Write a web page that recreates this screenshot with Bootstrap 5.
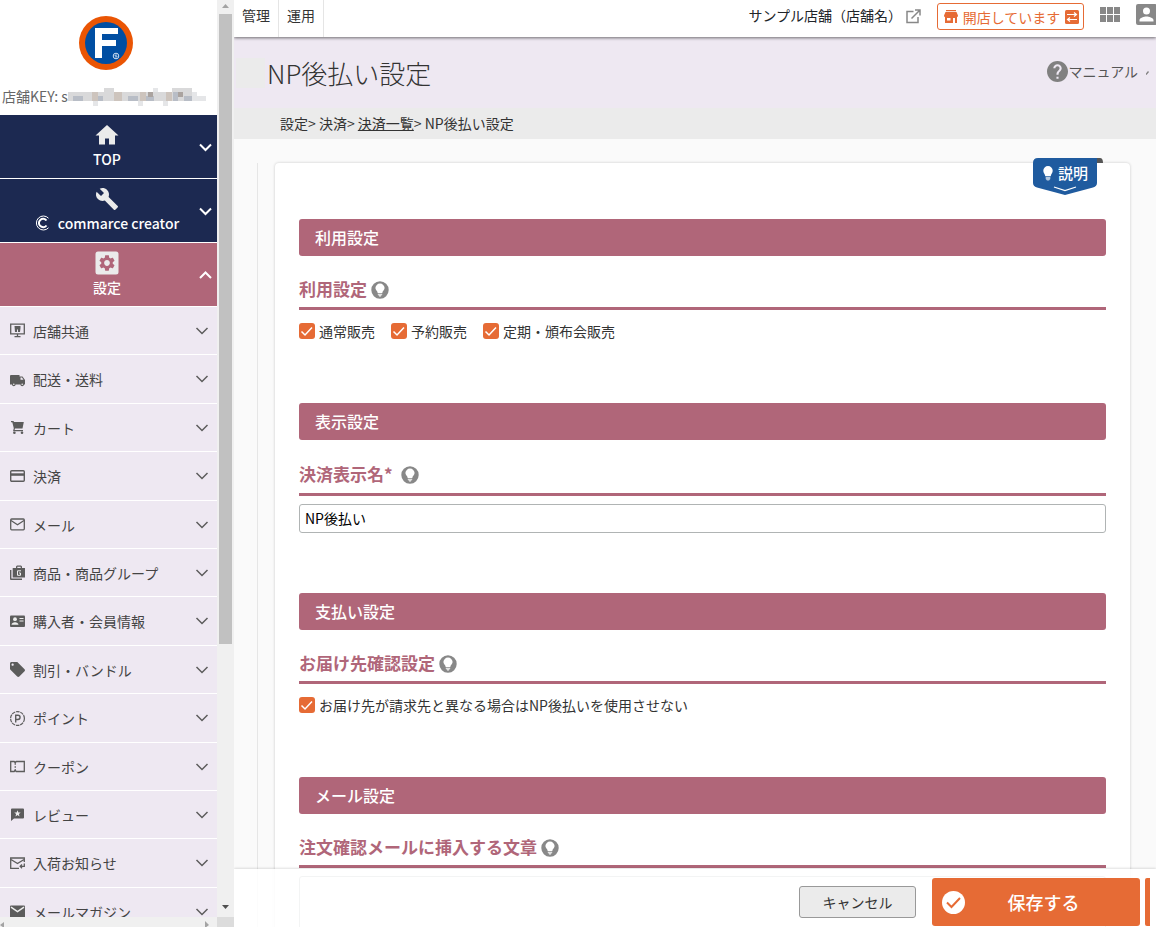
<!DOCTYPE html>
<html lang="ja">
<head>
<meta charset="utf-8">
<meta name="viewport" content="width=device-width, initial-scale=1">
<title>NP後払い設定</title>
<link href="https://cdn.jsdelivr.net/npm/bootstrap@5.3.0/dist/css/bootstrap.min.css" rel="stylesheet">
<style>
  :root { --rose: #b06679; --navy: #1c2951; --lav: #eee8f2; --orange: #e66b35; --ink: #333; --grey: #888; }
  body { font-family: "Noto Sans CJK JP", "Noto Sans", sans-serif; font-size: 14px; line-height: 20px; color: var(--ink); background: #fafafa; }
  a { color: inherit; text-decoration: none; }
  svg { display: block; flex: none; fill: currentColor; }
  .line-art { fill: none; stroke: currentColor; }

  /* sidebar */
  .side { width: 234px; }
  .brand { height: 115px; padding: 16px 0 0; color: #666; }
  .brand .logo { margin-left: 79px; }
  .shop-key { margin-top: 16px; padding-left: 2px; height: 20px; }
  .big-item { height: 64px; border-bottom: 1px solid #fff; background: var(--navy); color: #fff; font-weight: 500; padding: 8px 12px 0 0; }
  .big-item.open { background: var(--rose); }
  .big-item .pic { width: 24px; height: 24px; color: #ebebeb; margin-left: 9px; }
  .big-item .caption { padding-left: 9px; margin-top: 2px; }
  .big-item .arrow { right: 5px; top: 25px; }
  .sub-menu li { height: 48px; border-bottom: 1px solid #fff; background: var(--lav); }
  .sub-menu li:nth-child(5n+2), .sub-menu li:nth-child(5n+4) { height: 49px; }
  .sub-menu a { height: 100%; padding: 0 8px 0 10px; color: #444; }
  .sub-menu svg { color: #5c5c5c; }
  .sub-menu .label { margin-left: 8px; }
  .vbar { width: 17px; background: #f0f0f0; padding: 2px; }
  .vbar .thumb { width: 13px; height: 69%; background: #c1c1c1; margin-top: 5px; }
  .hbar { height: 10px; background: #f0f0f0; color: #a3a3a3; }
  .hbar .corner { width: 17px; height: 10px; background: #dcdcdc; }

  /* header */
  .top-bar { height: 37px; background: #fff; box-shadow: 0 1px 3px rgba(0,0,0,.55); z-index: 2; overflow: hidden; clip-path: inset(0 0 -6px 0); }
  .top-tab { height: 37px; padding: 5px 8px 0; border-right: 1px solid #e5e5e5; }
  .top-tools { margin-right: -1px; padding-top: 3px; color: var(--grey); }
  .shop-link { padding-top: 2px; }
  .open-btn { width: 147px; height: 27px; border: 1px solid var(--orange); border-radius: 3px; background: #fff; color: var(--orange); padding: 0 4px 0 6px; line-height: 20px; }
  .title-bar { height: 71px; background: var(--lav); padding-left: 2px; }
  .title-bar .swatch { width: 29px; height: 30px; background: #ebebeb; }
  .title-bar h1 { font-size: 26px; line-height: 40px; font-weight: 200; margin: 0 0 0 2px; }
  .manual { color: #555; padding-right: 7px; padding-bottom: 3px; }
  .manual svg { color: #808080; }
  .crumbs { height: 31px; background: #ebebeb; padding: 5px 0 0 46px; }

  /* settings panel */
  .work { border-left: 1px solid #e6e6e6; margin: 24px 26px 0 23px; padding-left: 17px; }
  .panel { background: #fff; border-radius: 4px; box-shadow: 0 0 3px rgba(0,0,0,.2); padding: 56px 24px 60px; }
  .bar-title { height: 37px; background: var(--rose); color: #fff; border-radius: 3px; font-size: 16px; line-height: 37px; font-weight: 500; padding-left: 16px; margin: 0; }
  .sub-title { height: 54px; border-bottom: 3px solid var(--rose); color: var(--rose); font-size: 17px; line-height: 24px; font-weight: 700; margin: 0; padding-top: 21px; }
  .sub-title.required { height: 56px; padding-top: 22px; }
  .sub-title svg { color: var(--grey); }
  .field-area { padding: 8px 0 60px; }
  .choice-row { height: 25px; }
  .choice { padding: 0; min-height: 0; margin: 0; }
  .choice .form-check-input { width: 16px; height: 16px; margin: 0 4px 0 0; float: none; border: 0; border-radius: 3px; background-color: var(--orange); }
  .choice .form-check-input:checked[type=checkbox] { background-image: url("data:image/svg+xml,%3csvg xmlns='http://www.w3.org/2000/svg' viewBox='0 0 16 16'%3e%3cpath fill='none' stroke='%23fff' stroke-width='1.500' d='m2.500 8.500 3.500 3.500L13 4.500'/%3e%3c/svg%3e"); }
  .name-box, .mail-box { border: 1px solid #b0b4b4; border-radius: 3px; padding: 0 5px 2px; font-size: 14px; color: #000; }
  .name-box { height: 29px; }
  .mail-box { height: 100px; }
  .help-tag { right: 26px; top: -5px; width: 71px; height: 38px; border: 0; background: none; color: #fff; font-weight: 500; padding: 0; }
  .help-tag .shape { left: 0; top: 0; }
  .help-tag .words { left: 25px; top: 5px; font-size: 15px; }

  /* action bar */
  .actions { height: 58px; background: rgba(255,255,255,.85); box-shadow: 0 -1px 2px rgba(0,0,0,.12); padding: 0 6px 0 16px; }
  .cancel { width: 117px; height: 32px; background: #ebebeb; border: 1px solid #999; border-radius: 3px; color: var(--ink); }
  .save { width: 208px; height: 48px; background: var(--orange); color: #fff; border: 0; border-radius: 3px; font-size: 18px; font-weight: 500; padding: 0 18px 0 10px; margin-right: 5px; }
  .sliver { width: 5px; height: 48px; background: var(--orange); border-radius: 2px 0 0 2px; }
</style>
</head>
<body>
<svg width="0" height="0" class="position-absolute">
  <symbol id="down" viewBox="0 0 14 8"><path d="M1.500 1 7 6.500 12.500 1" fill="none" stroke="currentColor" stroke-width="1.500"/></symbol>
  <symbol id="bulb" viewBox="0 0 18 18"><path fill-rule="evenodd" d="M9 .3a8.7 8.7 0 1 0 0 17.4A8.7 8.7 0 0 0 9 .3zM9 2.6a4.6 4.6 0 0 1 4.6 4.5c0 2.100-2.100 2.900-2.300 4.900H6.700C6.500 10 4.400 9.200 4.400 7.100A4.600 4.600 0 0 1 9 2.600zM6.800 12.700h4.400v1H6.800zM7.300 14.300h3.400l-1 1.300H8.300z"/></symbol>
</svg>

<div class="d-flex vh-100 overflow-hidden">
  <aside class="side d-flex flex-column flex-shrink-0">
    <div class="d-flex flex-grow-1 overflow-hidden">
      <nav class="flex-grow-1 overflow-hidden">
        <div class="brand bg-white">
          <svg class="logo" width="54" height="54" viewBox="0 0 54 54">
            <circle cx="27" cy="27" r="27" fill="#ea5504"/><circle cx="27" cy="27" r="21" fill="#004ea2"/>
            <path d="M16 12h23v6H23v6h14v6H23v12h-7z" fill="#fff"/>
            <circle cx="37" cy="40" r="2.800" fill="none" stroke="#cfe0f2"/><path d="M38 39h-2v1h2v1h-2" fill="none" stroke="#cfe0f2" stroke-width=".7"/>
          </svg>
          <div class="shop-key d-flex align-items-center"><span>店舗KEY: s</span>
            <svg width="138" height="20" viewBox="0 0 138 20">
              <path fill="#d9d9da" d="M0 6h125v9H0zM36 2h10v4H36zM104 2h20v4h-20z"/>
              <path fill="#b8bdc6" d="M5 10h10v5H5zM30 10h5v5h-5zM60 10h10v5H60zM76 10h10v5H76zM105 6h5v9h-5zM116 10h9v5h-9z"/>
              <path fill="#cdc4bd" d="M24 6h6v9h-6zM46 6h8v9h-8zM72 6h6v9h-6zM98 6h6v9h-6z"/>
              <path fill="#aaa39f" d="M80 6h5v5h-5zM110 6h5v5h-5z"/>
              <path fill="#e5e6e8" d="M25 15h5v5h-5zM70 15h5v5h-5zM95 15h5v5h-5zM85 2h5v4h-5zM124 6h5v9h-5zM129 10h9v5h-9z"/>
            </svg></div>
        </div>

        <a href="#" class="big-item position-relative d-flex flex-column align-items-center">
          <svg class="pic" viewBox="0 0 24 24"><path d="M10 21.500v-6h4v6h6v-9h3.500L12 2 .5 12.500H4v9z"/></svg>
          <span class="caption">TOP</span>
          <svg class="arrow position-absolute" width="13" height="14" viewBox="0 0 13 14"><path class="line-art" stroke-width="2" d="M1 4.500 6.500 10 12 4.500"/></svg>
        </a>
        <a href="#" class="big-item position-relative d-flex flex-column align-items-center">
          <svg class="pic" viewBox="0 0 24 24"><path d="M22.700 19l-9.100-9.100c.9-2.300.4-5-1.500-6.900-2-2-5-2.400-7.400-1.300L9 6 6 9 1.600 4.700C.4 7.100.9 10.100 2.900 12.100c1.900 1.900 4.600 2.400 6.900 1.500l9.100 9.100c.4.4 1 .4 1.400 0l2.300-2.300c.5-.4.5-1.100.1-1.400z"/></svg>
          <span class="caption d-flex align-items-center"><svg class="me-1" width="15" height="16" viewBox="0 0 15 16"><g class="line-art"><path stroke-width="2" d="M11.500 5.500a4.200 4.200 0 1 0 0 5"/><path d="M13.500 3.200A7 7 0 1 0 13.500 12.800" stroke-width="1"/></g></svg><span class="ps-1">commarce creator</span></span>
          <svg class="arrow position-absolute" width="13" height="14" viewBox="0 0 13 14"><path class="line-art" stroke-width="2" d="M1 4.500 6.500 10 12 4.500"/></svg>
        </a>
        <a href="#" class="big-item open position-relative d-flex flex-column align-items-center">
          <svg class="pic" viewBox="0 0 24 24"><rect x=".5" y=".5" width="23" height="23" rx="2.500"/><path transform="translate(2.400 2.400) scale(.8)" fill="#b06679" d="M19.140 12.940c.04-.3.06-.61.06-.94 0-.32-.02-.64-.07-.94l2.030-1.580c.18-.14.23-.41.12-.61l-1.920-3.320c-.12-.22-.37-.29-.59-.22l-2.390.96c-.5-.38-1.030-.7-1.620-.94l-.36-2.540c-.04-.24-.24-.41-.48-.41h-3.840c-.24 0-.43.17-.47.41l-.36 2.540c-.59.24-1.130.57-1.620.94l-2.390-.96c-.22-.08-.47 0-.59.22L2.740 8.870c-.12.21-.08.47.12.61l2.030 1.580c-.05.3-.09.63-.09.94s.02.64.07.94l-2.030 1.580c-.18.14-.23.41-.12.61l1.920 3.320c.12.22.37.29.59.22l2.390-.96c.5.38 1.030.7 1.620.94l.36 2.540c.05.24.24.41.48.41h3.840c.24 0 .44-.17.47-.41l.36-2.540c.59-.24 1.130-.56 1.620-.94l2.390.96c.22.08.47 0 .59-.22l1.920-3.320c.12-.22.07-.47-.12-.61l-2.010-1.580zM12 15.600c-1.980 0-3.600-1.620-3.600-3.600s1.620-3.600 3.600-3.600 3.600 1.620 3.600 3.600-1.620 3.600-3.600 3.600z"/></svg>
          <span class="caption">設定</span>
          <svg class="arrow position-absolute" width="13" height="14" viewBox="0 0 13 14"><path class="line-art" stroke-width="2" d="M1 10 6.500 4.500 12 10"/></svg>
        </a>

        <ul class="sub-menu list-unstyled mb-0">
          <li><a href="#" class="d-flex align-items-center"><svg width="15" height="15" viewBox="0 0 15 15"><path class="line-art" stroke-width="1.300" d="M.7 1.200h13.600v9.600H.7zM7.500 11v3M4.500 13.700h6"/><path d="M4.500 3h6v2l-.5 4H8V6.500H7V9H5z"/></svg><span class="label">店舗共通</span><svg class="ms-auto" width="14" height="8"><use href="#down"/></svg></a></li>
          <li><a href="#" class="d-flex align-items-center"><svg width="15" height="15" viewBox="0 0 15 15"><path fill-rule="evenodd" d="M1 3h8.500v1.500h3l2.500 3.500v4.500h-1a1.800 1.800 0 0 1-3.600 0H5.600a1.800 1.800 0 0 1-3.600 0H0V4q0-1 1-1zM10.500 5.500v2.300h3L12 5.500z"/><circle cx="3.800" cy="12.300" r=".8" fill="#eee"/><circle cx="12.200" cy="12.300" r=".8" fill="#eee"/></svg><span class="label">配送・送料</span><svg class="ms-auto" width="14" height="8"><use href="#down"/></svg></a></li>
          <li><a href="#" class="d-flex align-items-center"><svg width="15" height="15" viewBox="0 0 15 15"><path d="M1 1h2.500l.5 1h9.800l-1.300 6.500H5L4.600 10H13v1.300H3L3.800 8.300 2.300 2.300H1z"/><circle cx="4.400" cy="12.700" r="1.300"/><circle cx="12" cy="12.700" r="1.300"/></svg><span class="label">カート</span><svg class="ms-auto" width="14" height="8"><use href="#down"/></svg></a></li>
          <li><a href="#" class="d-flex align-items-center"><svg width="15" height="15" viewBox="0 0 15 15"><rect class="line-art" x=".7" y="1.700" width="13.600" height="10.600" rx="1" stroke-width="1.400"/><path d="M1 4.300h13v2.500H1z"/></svg><span class="label">決済</span><svg class="ms-auto" width="14" height="8"><use href="#down"/></svg></a></li>
          <li><a href="#" class="d-flex align-items-center"><svg width="15" height="15" viewBox="0 0 15 15"><rect class="line-art" x=".7" y="2" width="13.600" height="10.800" rx="1" stroke-width="1.300"/><path class="line-art" stroke-width="1.300" d="m1 3.500 6.500 4.300L14 3.500"/></svg><span class="label">メール</span><svg class="ms-auto" width="14" height="8"><use href="#down"/></svg></a></li>
          <li><a href="#" class="d-flex align-items-center"><svg width="15" height="15" viewBox="0 0 15 15"><path d="M0 5h1.400v8.600H12V15H1q-1 0-1-1z"/><path fill-rule="evenodd" d="M6 3V1.500L7 .5h4l1 1V3h3v9.500H2.700V3zm1.300 0h3.400V1.800H7.300z"/><path d="M11 5.800H7.500v4.500h3V8H9" fill="none" stroke="#eee"/></svg><span class="label">商品・商品グループ</span><svg class="ms-auto" width="14" height="8"><use href="#down"/></svg></a></li>
          <li><a href="#" class="d-flex align-items-center"><svg width="15" height="15" viewBox="0 0 15 15"><rect y="1.500" width="15" height="11.500" rx="1"/><g fill="#eee"><circle cx="5" cy="5.200" r="1.900"/><path d="M1.500 10.800c0-3.500 7-3.500 7 0zM9.500 4h4v1h-4zM9.500 6.500h4v1h-4z"/></g></svg><span class="label">購入者・会員情報</span><svg class="ms-auto" width="14" height="8"><use href="#down"/></svg></a></li>
          <li><a href="#" class="d-flex align-items-center"><svg width="15" height="15" viewBox="2 2 20 20"><path d="M21.410 11.580l-9-9C12.050 2.220 11.550 2 11 2H4c-1.100 0-2 .9-2 2v7c0 .55.22 1.050.59 1.420l9 9c.36.36.86.58 1.410.58s1.050-.22 1.410-.59l7-7c.37-.36.59-.86.59-1.410s-.23-1.060-.59-1.420zM5.500 7C4.670 7 4 6.330 4 5.500S4.670 4 5.500 4 7 4.670 7 5.500 6.330 7 5.500 7z"/></svg><span class="label">割引・バンドル</span><svg class="ms-auto" width="14" height="8"><use href="#down"/></svg></a></li>
          <li><a href="#" class="d-flex align-items-center"><svg width="15" height="15" viewBox="0 0 15 15"><circle class="line-art" cx="7.500" cy="7.500" r="6.900" stroke-width="1.200" stroke-dasharray="3.600 .8"/><path class="line-art" stroke-width="1.400" d="M5.700 11.500V4.200h2.200a2 2 0 0 1 0 4.300H5.700"/></svg><span class="label">ポイント</span><svg class="ms-auto" width="14" height="8"><use href="#down"/></svg></a></li>
          <li><a href="#" class="d-flex align-items-center"><svg width="15" height="15" viewBox="0 0 15 15"><path class="line-art" stroke-width="1.300" d="M.7 2.500h3.500l1 1.200 1-1.200h8.100v10H6.200l-1-1.200-1 1.200H.7z"/><path class="line-art" stroke-dasharray="2 1" d="M5.200 4v8"/></svg><span class="label">クーポン</span><svg class="ms-auto" width="14" height="8"><use href="#down"/></svg></a></li>
          <li><a href="#" class="d-flex align-items-center"><svg width="15" height="15" viewBox="0 0 15 15"><path d="M2 1.500h11q1 0 1 1v8q0 1-1 1H4l-3 2.500V2.500q0-1 1-1z"/><path fill="#eee" d="m7.500 3.200.9 2.200 2.300.2-1.800 1.500.6 2.300-2-1.300-2 1.300.6-2.300-1.800-1.500 2.300-.2z"/></svg><span class="label">レビュー</span><svg class="ms-auto" width="14" height="8"><use href="#down"/></svg></a></li>
          <li><a href="#" class="d-flex align-items-center"><svg width="15" height="15" viewBox="0 0 15 15"><path class="line-art" stroke-width="1.300" d="M9 12.300H.7V2h13.600v4M1 3.500 7.500 7.500 14 3.500M14.300 7.500v2.800h-4M12 8.500l-1.800 1.800L12 12.200"/></svg><span class="label">入荷お知らせ</span><svg class="ms-auto" width="14" height="8"><use href="#down"/></svg></a></li>
          <li><a href="#" class="d-flex align-items-center"><svg width="15" height="15" viewBox="0 0 15 15"><rect y="1.500" width="15" height="12" rx="1"/><path d="m1 3.200 6.500 4.500L14 3.200" fill="none" stroke="#eee" stroke-width="1.400"/></svg><span class="label">メールマガジン</span><svg class="ms-auto" width="14" height="8"><use href="#down"/></svg></a></li>
        </ul>
      </nav>
      <div class="vbar d-flex flex-column align-items-center">
        <svg width="7" height="7" viewBox="0 0 7 7" color="#a3a3a3"><path d="M0 6 3.500 2 7 6z"/></svg>
        <div class="thumb"></div>
        <svg class="mt-auto mb-1" width="7" height="7" viewBox="0 0 7 7" color="#505050"><path d="M0 1h7L3.500 5z"/></svg>
      </div>
    </div>
    <div class="hbar d-flex justify-content-between">
      <svg width="4" height="10" viewBox="0 0 4 10"><path d="M4 5v6L0 8z"/></svg>
      <div class="d-flex"><svg class="me-2" width="4" height="10" viewBox="0 0 4 10"><path d="M0 4v7l4-3z"/></svg><div class="corner"></div></div>
    </div>
  </aside>

  <div class="flex-grow-1 d-flex flex-column position-relative overflow-hidden">
    <header class="top-bar d-flex flex-shrink-0 position-relative">
      <a href="#" class="top-tab">管理</a>
      <a href="#" class="top-tab">運用</a>
      <div class="top-tools ms-auto d-flex align-items-start">
        <a href="#" class="shop-link d-flex text-nowrap"><span class="text-dark">サンプル店舗（店舗名）</span>
          <svg class="ms-1 me-3 mt-1" width="15" height="15" viewBox="0 0 15 15"><path class="line-art" stroke-width="1.500" d="M7.500 2.500H1v11h11V8M9 1h5v5.500M13.500 1.500l-8 8"/></svg></a>
        <button type="button" class="open-btn d-flex align-items-center justify-content-between text-nowrap">
          <svg width="14" height="13" viewBox="0 0 14 13"><path d="M2 0h10v1.200H2zM1.500 2h11L14 5.500q0 1.500-1 1.500v6h-2V8H9v5H1V7Q0 7 0 5.500zM3 8v2.500h3.500V8z" fill-rule="evenodd"/></svg>
          <span>開店しています</span>
          <svg width="14" height="14" viewBox="0 0 14 14"><rect width="14" height="14" rx="1.500"/><path d="M2 4.500h9M9 2.500l2.500 2L9 6.500M12 9.500H3M5 7.500l-2.500 2 2.500 2" fill="none" stroke="#fff" stroke-width="1.200"/></svg>
        </button>
        <a href="#" class="ms-3 pt-1" aria-label="メニュー"><svg width="20" height="15" viewBox="0 0 20 15"><path d="M0 0h6v7H0zM7 0h6v7H7zM14 0h6v7h-6zM0 8h6v7H0zM7 8h6v7H7zM14 8h6v7h-6z"/></svg></a>
        <a href="#" class="ms-3" aria-label="アカウント"><svg width="21" height="22" viewBox="0 -1 21 22"><path fill-rule="evenodd" d="M2 0h17q2 0 2 2v17q0 2-2 2H2q-2 0-2-2V2q0-2 2-2zM10.500 3.500a3.500 3.500 0 1 0 0 7 3.500 3.500 0 0 0 0-7zM3.500 17.500h14v-1.300c0-2.300-4.700-3.600-7-3.600s-7 1.300-7 3.600z"/></svg></a>
      </div>
    </header>

    <div class="title-bar d-flex align-items-center flex-shrink-0">
      <div class="swatch"></div>
      <h1>NP後払い設定</h1>
      <a href="#" class="manual ms-auto d-flex align-items-center">
        <svg width="21" height="21" viewBox="2 2 20 20"><path d="M12 2C6.480 2 2 6.480 2 12s4.480 10 10 10 10-4.480 10-10S17.520 2 12 2zm1 17h-2v-2h2v2zm2.070-7.750l-.9.920C13.450 12.900 13 13.500 13 15h-2v-.5c0-1.100.45-2.100 1.170-2.830l1.240-1.260c.37-.36.59-.86.59-1.410 0-1.100-.9-2-2-2s-2 .9-2 2H8c0-2.210 1.790-4 4-4s4 1.790 4 4c0 .88-.36 1.680-.93 2.250z"/></svg>
        <span>マニュアル</span><svg class="ms-2 mt-1" width="3" height="4" viewBox="0 0 3 4"><path class="line-art" stroke-width="1.300" d="M0 3.500 2.500.5"/></svg>
      </a>
    </div>
    <nav class="crumbs flex-shrink-0">設定&gt; 決済&gt; <a href="#" class="text-decoration-underline">決済一覧</a>&gt; NP後払い設定</nav>

    <main class="work flex-grow-1">
      <form class="panel position-relative">
        <button type="button" class="help-tag position-absolute">
          <svg class="shape position-absolute" width="71" height="38" viewBox="0 0 71 38"><path fill="#555" d="M62 0h5q3 0 3 5h-8z"/><path fill="#1f5b9f" d="M5 0h59v25q0 3-4 4.500L32 37 4 29.500Q0 28 0 25V5q0-5 5-5z"/><path d="m21 29 11 3.500L43 29" fill="none" stroke="#fff" stroke-width="1.300"/><path d="M15 8a4.700 4.700 0 0 1 4.700 4.800c0 2.500-1.700 3-2 5.400h-5.400c-.3-2.400-2-2.900-2-5.400A4.700 4.700 0 0 1 15 8z"/><path fill="#b5c9df" d="M12.700 19h4.600v2l-1.300 1.500h-2L12.700 21z"/></svg>
          <span class="words position-absolute text-nowrap">説明</span>
        </button>

        <section>
          <h2 class="bar-title">利用設定</h2>
          <h3 class="sub-title d-flex"><span>利用設定</span><svg class="ms-1 mt-1" width="18" height="18"><use href="#bulb"/></svg></h3>
          <div class="field-area">
            <div class="choice-row d-flex align-items-center gap-3">
              <label class="choice form-check d-flex align-items-center"><input class="form-check-input" type="checkbox" checked>通常販売</label>
              <label class="choice form-check d-flex align-items-center"><input class="form-check-input" type="checkbox" checked>予約販売</label>
              <label class="choice form-check d-flex align-items-center"><input class="form-check-input" type="checkbox" checked>定期・頒布会販売</label>
            </div>
          </div>
        </section>

        <section>
          <h2 class="bar-title">表示設定</h2>
          <h3 class="sub-title required d-flex"><label for="payName">決済表示名*</label><svg class="ms-2 mt-1" width="18" height="18"><use href="#bulb"/></svg></h3>
          <div class="field-area"><input id="payName" type="text" class="name-box form-control" value="NP後払い"></div>
        </section>

        <section>
          <h2 class="bar-title">支払い設定</h2>
          <h3 class="sub-title d-flex"><span>お届け先確認設定</span><svg class="ms-1 mt-1" width="18" height="18"><use href="#bulb"/></svg></h3>
          <div class="field-area">
            <div class="choice-row d-flex align-items-center">
              <label class="choice form-check d-flex align-items-center"><input class="form-check-input" type="checkbox" checked>お届け先が請求先と異なる場合はNP後払いを使用させない</label>
            </div>
          </div>
        </section>

        <section>
          <h2 class="bar-title">メール設定</h2>
          <h3 class="sub-title d-flex"><label for="mailText">注文確認メールに挿入する文章</label><svg class="ms-1 mt-1" width="18" height="18"><use href="#bulb"/></svg></h3>
          <div class="field-area"><textarea id="mailText" class="mail-box form-control"></textarea></div>
        </section>
      </form>
    </main>

    <footer class="actions position-absolute bottom-0 start-0 end-0 d-flex align-items-center justify-content-end">
      <button type="button" class="cancel me-3 mt-2">キャンセル</button>
      <button type="submit" class="save d-flex align-items-center mt-2">
        <svg width="23" height="23" viewBox="0 0 23 23"><circle cx="11.500" cy="11.500" r="11.500"/><path d="m5 11.500 4.500 4.500L18 7" fill="none" stroke="#e66b35" stroke-width="2"/></svg>
        <span class="flex-grow-1 text-center">保存する</span>
      </button>
      <div class="sliver mt-2"></div>
    </footer>
  </div>
</div>
<script src="https://cdn.jsdelivr.net/npm/bootstrap@5.3.0/dist/js/bootstrap.bundle.min.js"></script>
</body>
</html>
